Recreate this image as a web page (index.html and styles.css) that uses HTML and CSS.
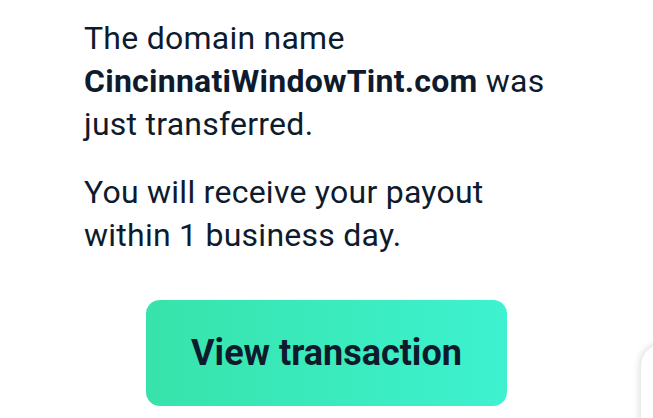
FILE: index.html
```html
<!DOCTYPE html>
<html lang="en">
<head>
    <meta charset="UTF-8">
    <meta name="viewport" content="width=device-width, initial-scale=1.0">
    <title>Domain transferred</title>
    <link rel="stylesheet" href="styles.css">
</head>
<body>
    <main class="transfer">
        <p class="transfer-text">The domain name <strong>CincinnatiWindowTint.com</strong> was just transferred.</p>
        <p class="transfer-text">You will receive your payout within 1 business day.</p>
        <div class="transfer-actions">
            <a href="#" class="view-button">View transaction</a>
        </div>
    </main>

    <!-- edge of the chat widget peeking in -->
    <div class="side-card"></div>
</body>
</html>
```

FILE: styles.css
```css
:root {
    --text-primary: #0e1b2d;
    --accent-start: #37e3aa;
    --accent-end: #3ef2d0;
    --font-family-sans: 'Roboto', 'Liberation Sans', sans-serif;
}

*, *::before, *::after {
    box-sizing: border-box;
    margin: 0;
    padding: 0;
}

html, body {
    height: 100%;
}

body {
    font-family: var(--font-family-sans);
    background-color: #fff;
    color: var(--text-primary);
    overflow: hidden;
}

.transfer {
    width: 485px;
    margin: 0 auto;
    padding-top: 17px;
}

.transfer-text {
    font-size: 32px;
    line-height: 43px;
    letter-spacing: 0.25px;
    margin-bottom: 25px;
}

.transfer-text strong {
    font-weight: 700;
}

.transfer-actions {
    display: flex;
    justify-content: center;
    padding-top: 18px;
}

.view-button {
    display: flex;
    align-items: center;
    justify-content: center;
    width: 361px;
    height: 106px;
    border-radius: 14px;
    background: linear-gradient(90deg, var(--accent-start), var(--accent-end));
    color: var(--text-primary);
    font-size: 36px;
    font-weight: 700;
    text-decoration: none;
}

.side-card {
    position: fixed;
    left: 641px;
    top: 344px;
    width: 60px;
    height: 120px;
    background: #fff;
    border-radius: 22px 0 0 0;
    box-shadow: -2px -1px 6px rgba(0, 0, 0, 0.12);
}
```
